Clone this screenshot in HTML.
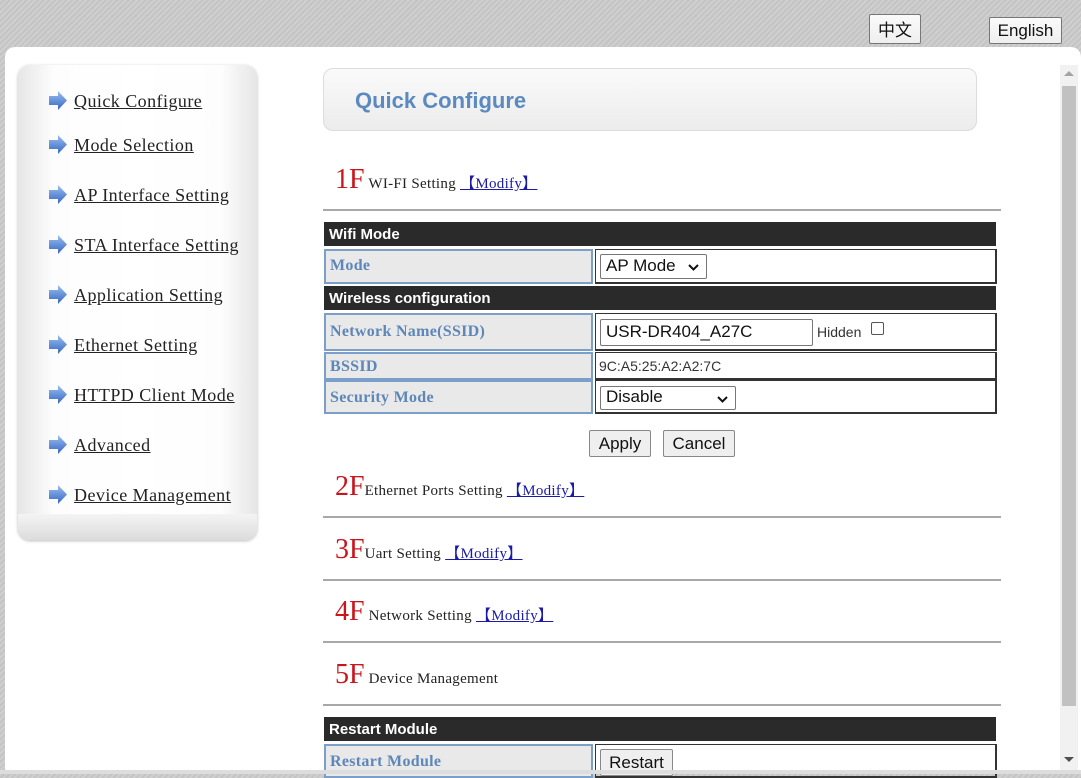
<!DOCTYPE html>
<html><head><meta charset="utf-8"><style>
*{margin:0;padding:0;box-sizing:border-box}
body{width:1081px;height:774px;overflow:hidden;position:relative;background:repeating-linear-gradient(135deg,#cfcfcf 0 2px,#c4c4c4 2px 4px);font-family:"Liberation Serif",serif}
.a{position:absolute}
.panel{left:5px;top:47px;width:1076px;height:727px;background:#fff;border-radius:10px 10px 0 0}
.lb{background:linear-gradient(#fafafa,#efefef);border:1px solid #777;border-radius:2px;font:17px "Liberation Sans",sans-serif;color:#111;text-align:center}
.side{left:18px;top:65px;width:239px;height:475px;border-radius:12px;background:linear-gradient(90deg,#e6e6e6,#fdfdfd 15%,#fff 50%,#fdfdfd 85%,#e6e6e6);box-shadow:0 1px 3px #bbb}
.side:after{content:"";position:absolute;left:0;right:0;bottom:0;height:26px;border-radius:0 0 12px 12px;background:linear-gradient(#f4f4f4,#dcdcdc)}
.nav{left:48px;font-size:18px;color:#222;text-decoration:underline;white-space:nowrap;letter-spacing:0.45px}
.nav svg{vertical-align:-4px;margin-right:6px}
.title{left:323px;top:68px;width:654px;height:63px;border-radius:10px;background:linear-gradient(#fafafa,#ececec);border:1px solid #ddd;font:bold 22px "Liberation Sans",sans-serif;color:#5b8ac0;padding:19px 0 0 31px}
.f{left:335px;font-size:15px;color:#222;white-space:nowrap;letter-spacing:0.3px}
.f b{font-weight:normal;color:#c8161d;font-size:28px;letter-spacing:0}
.f a{color:#1a1aa6;text-decoration:underline}
.hr{left:323px;width:678px;height:2px;background:#a8a8a8}
.hd{left:324px;width:672px;height:24px;background:#2a2a2a;color:#fff;font:bold 15px "Liberation Sans",sans-serif;padding:4px 5px}
.lc{left:324px;width:269px;background:#e9e9e9;border:2px solid #7a9fc8;color:#5e86b8;font-weight:bold;font-size:16px;padding-left:4px;letter-spacing:0.3px}
.vc{left:595px;width:402px;border:1px solid #333;border-width:1px 2px 2px 1px;font:15px "Liberation Sans",sans-serif;color:#333;padding-left:3px}
.sel{position:absolute;border:1px solid #777;border-radius:2px;background:#fff;font:17px "Liberation Sans",sans-serif;color:#111;padding:2px 5px}
.sel svg{position:absolute;right:7px;top:9px}
.btn{background:#efefef;border:1px solid #888;border-radius:2px;font:17px "Liberation Sans",sans-serif;color:#111;text-align:center}
</style></head><body>
<div class="a lb" style="left:869px;top:14px;width:52px;height:30px;line-height:28px;font-family:'Noto Sans CJK SC',sans-serif">中文</div>
<div class="a lb" style="left:989px;top:17px;width:73px;height:27px;line-height:25px">English</div>
<div class="a panel"></div>
<div class="a" style="left:1060px;top:65px;width:18px;height:705px;background:#f1f1f1"></div>
<div class="a" style="left:1062px;top:86px;width:14px;height:620px;background:#c1c1c1"></div>
<div class="a" style="left:1064px;top:71px;width:0;height:0;border:5px solid transparent;border-bottom-color:#a3a3a3;border-top:0"></div>
<div class="a" style="left:1064px;top:757px;width:0;height:0;border:5px solid transparent;border-top-color:#505050;border-bottom:0"></div>
<div class="a side"></div>
<svg width="0" height="0" style="position:absolute"><defs><linearGradient id="g" x1="0" y1="0" x2="0" y2="1"><stop offset="0" stop-color="#9cc0ee"/><stop offset="1" stop-color="#3566c4"/></linearGradient></defs></svg>
<div class="a nav" style="top:90px"><svg width="20" height="21" viewBox="0 0 20 21"><path d="M1 6h9V1l9 9.5-9 9.5v-5H1z" fill="url(#g)"/></svg>Quick Configure</div>
<div class="a nav" style="top:134px"><svg width="20" height="21" viewBox="0 0 20 21"><path d="M1 6h9V1l9 9.5-9 9.5v-5H1z" fill="url(#g)"/></svg>Mode Selection</div>
<div class="a nav" style="top:184px"><svg width="20" height="21" viewBox="0 0 20 21"><path d="M1 6h9V1l9 9.5-9 9.5v-5H1z" fill="url(#g)"/></svg>AP Interface Setting</div>
<div class="a nav" style="top:234px"><svg width="20" height="21" viewBox="0 0 20 21"><path d="M1 6h9V1l9 9.5-9 9.5v-5H1z" fill="url(#g)"/></svg>STA Interface Setting</div>
<div class="a nav" style="top:284px"><svg width="20" height="21" viewBox="0 0 20 21"><path d="M1 6h9V1l9 9.5-9 9.5v-5H1z" fill="url(#g)"/></svg>Application Setting</div>
<div class="a nav" style="top:334px"><svg width="20" height="21" viewBox="0 0 20 21"><path d="M1 6h9V1l9 9.5-9 9.5v-5H1z" fill="url(#g)"/></svg>Ethernet Setting</div>
<div class="a nav" style="top:384px"><svg width="20" height="21" viewBox="0 0 20 21"><path d="M1 6h9V1l9 9.5-9 9.5v-5H1z" fill="url(#g)"/></svg>HTTPD Client Mode</div>
<div class="a nav" style="top:434px"><svg width="20" height="21" viewBox="0 0 20 21"><path d="M1 6h9V1l9 9.5-9 9.5v-5H1z" fill="url(#g)"/></svg>Advanced</div>
<div class="a nav" style="top:484px"><svg width="20" height="21" viewBox="0 0 20 21"><path d="M1 6h9V1l9 9.5-9 9.5v-5H1z" fill="url(#g)"/></svg>Device Management</div>
<div class="a title">Quick Configure</div>
<div class="a f" style="top:164px"><b>1F</b> WI-FI Setting <a>【Modify】</a></div>
<div class="a hr" style="top:209px"></div>
<div class="a hd" style="top:222px">Wifi Mode</div>
<div class="a lc" style="top:249px;height:35px;padding-top:6px">Mode</div>
<div class="a vc" style="top:249px;height:35px"><div class="sel" style="left:4px;top:4px;width:107px;height:25px;padding-top:1px">AP Mode <svg width="11" height="7" viewBox="0 0 11 7"><path d="M1 1l4.5 4.5L10 1" stroke="#111" stroke-width="2" fill="none"/></svg></div></div>
<div class="a hd" style="top:286px">Wireless configuration</div>
<div class="a lc" style="top:313px;height:38px;padding-top:8px">Network Name(SSID)</div>
<div class="a vc" style="top:313px;height:38px"><div class="sel" style="left:4px;top:5px;width:213px;height:27px">USR-DR404_A27C</div><span style="position:absolute;left:221px;top:10px;font-size:14px">Hidden</span><span style="position:absolute;left:275px;top:8px;width:13px;height:13px;border:1px solid #555;border-radius:2px"></span></div>
<div class="a lc" style="top:352px;height:28px;padding-top:4px">BSSID</div>
<div class="a vc" style="top:352px;height:28px;padding-top:5px;font-size:14px">9C:A5:25:A2:A2:7C</div>
<div class="a lc" style="top:380px;height:34px;padding-top:7px">Security Mode</div>
<div class="a vc" style="top:380px;height:34px"><div class="sel" style="left:4px;top:5px;width:136px;height:24px;padding-top:0">Disable <svg width="11" height="7" viewBox="0 0 11 7"><path d="M1 1l4.5 4.5L10 1" stroke="#111" stroke-width="2" fill="none"/></svg></div></div>
<div class="a btn" style="left:589px;top:430px;width:62px;height:27px;line-height:25px">Apply</div>
<div class="a btn" style="left:663px;top:430px;width:72px;height:27px;line-height:25px">Cancel</div>
<div class="a f" style="top:471px"><b>2F</b>Ethernet Ports Setting <a>【Modify】</a></div>
<div class="a hr" style="top:516px"></div>
<div class="a f" style="top:534px"><b>3F</b>Uart Setting <a>【Modify】</a></div>
<div class="a hr" style="top:579px"></div>
<div class="a f" style="top:596px"><b>4F</b> Network Setting <a>【Modify】</a></div>
<div class="a hr" style="top:641px"></div>
<div class="a f" style="top:659px"><b>5F</b> Device Management</div>
<div class="a hr" style="top:704px"></div>
<div class="a hd" style="top:717px">Restart Module</div>
<div class="a lc" style="top:744px;height:34px;padding-top:7px">Restart Module</div>
<div class="a vc" style="top:744px;height:34px"><div class="btn" style="position:absolute;left:4px;top:4px;width:73px;height:27px;line-height:25px">Restart</div></div>
<div class="a" style="left:0;top:770px;width:1081px;height:4px;background:#ddd"></div>
</body></html>
